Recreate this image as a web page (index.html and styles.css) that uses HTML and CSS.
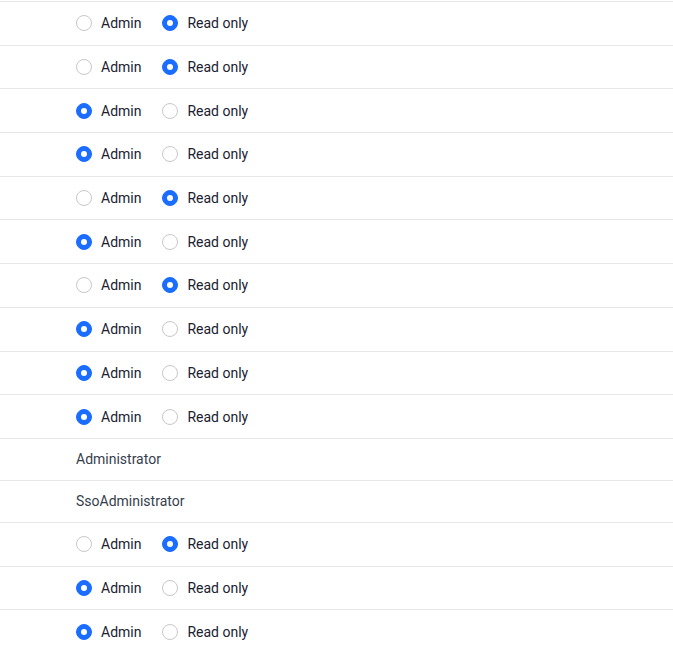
FILE: index.html
```html
<!DOCTYPE html>
<html>
<head>
<meta charset="utf-8">
<link rel="stylesheet" href="styles.css">
</head>
<body>
<div class="table">
  <div class="row"><label class="opt"><span class="radio"></span>Admin</label><label class="opt"><span class="radio on"></span>Read only</label></div>
  <div class="row"><label class="opt"><span class="radio"></span>Admin</label><label class="opt"><span class="radio on"></span>Read only</label></div>
  <div class="row"><label class="opt"><span class="radio on"></span>Admin</label><label class="opt"><span class="radio"></span>Read only</label></div>
  <div class="row"><label class="opt"><span class="radio on"></span>Admin</label><label class="opt"><span class="radio"></span>Read only</label></div>
  <div class="row"><label class="opt"><span class="radio"></span>Admin</label><label class="opt"><span class="radio on"></span>Read only</label></div>
  <div class="row"><label class="opt"><span class="radio on"></span>Admin</label><label class="opt"><span class="radio"></span>Read only</label></div>
  <div class="row"><label class="opt"><span class="radio"></span>Admin</label><label class="opt"><span class="radio on"></span>Read only</label></div>
  <div class="row"><label class="opt"><span class="radio on"></span>Admin</label><label class="opt"><span class="radio"></span>Read only</label></div>
  <div class="row"><label class="opt"><span class="radio on"></span>Admin</label><label class="opt"><span class="radio"></span>Read only</label></div>
  <div class="row"><label class="opt"><span class="radio on"></span>Admin</label><label class="opt"><span class="radio"></span>Read only</label></div>
  <div class="row text">Administrator</div>
  <div class="row text">SsoAdministrator</div>
  <div class="row"><label class="opt"><span class="radio"></span>Admin</label><label class="opt"><span class="radio on"></span>Read only</label></div>
  <div class="row"><label class="opt"><span class="radio on"></span>Admin</label><label class="opt"><span class="radio"></span>Read only</label></div>
  <div class="row"><label class="opt"><span class="radio on"></span>Admin</label><label class="opt"><span class="radio"></span>Read only</label></div>
</div>
</body>
</html>
```
FILE: styles.css
```css
html, body {
  margin: 0;
  padding: 0;
  background: #ffffff;
}
body {
  font-family: Roboto, "Noto Sans", sans-serif;
  font-size: 14px;
  color: #1a2130;
}
.table {
  padding-top: 1px;
}
.row {
  display: flex;
  align-items: center;
  gap: 21px;
  height: 42.7px;
  padding-left: 76px;
  border-top: 1px solid #e8e8e8;
  box-sizing: content-box;
}
.row.text {
  height: 41px;
  color: #363e4d;
}
.opt {
  display: flex;
  align-items: center;
  gap: 9px;
}
.radio {
  width: 16px;
  height: 16px;
  box-sizing: border-box;
  border: 1px solid #c8c8c8;
  border-radius: 50%;
  background: #fff;
  display: flex;
  align-items: center;
  justify-content: center;
}
.radio.on {
  background: #1a6dff;
  border-color: #1a6dff;
}
.radio.on::after {
  content: "";
  width: 6px;
  height: 6px;
  border-radius: 50%;
  background: #fff;
}
```
